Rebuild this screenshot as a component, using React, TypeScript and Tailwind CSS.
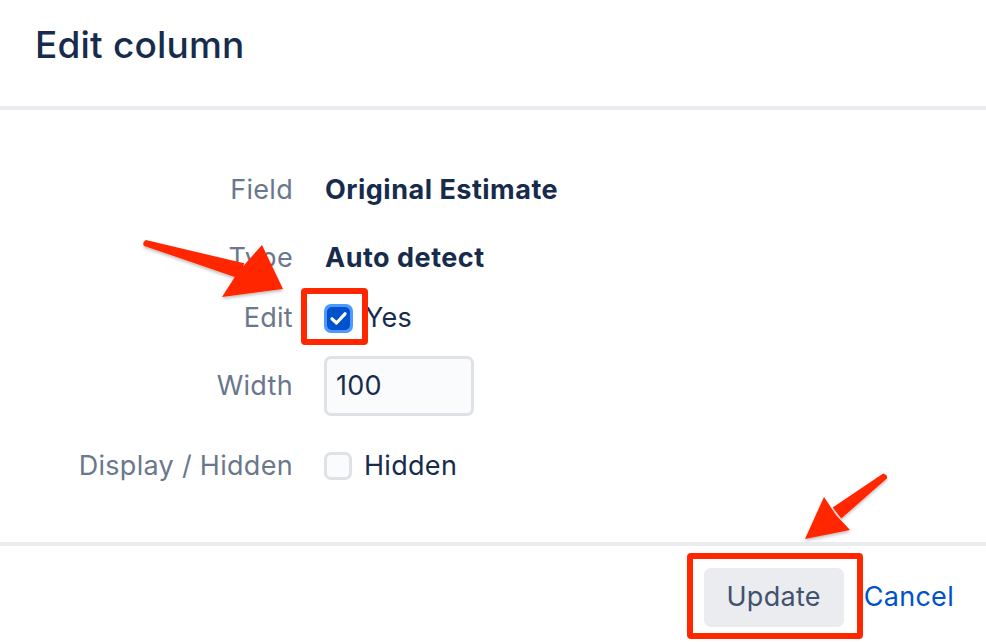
import React from "react";

function Checked() {
  return (
    <div className="w-[29px] h-[29px] rounded-[7px] bg-[#4c9aff] p-[3px] shrink-0">
      <div className="w-full h-full rounded-[5px] bg-[#0052cc] flex items-center justify-center">
        <svg width="23" height="23" viewBox="0 0 23 23">
          <path d="M5 11.8 L9.5 16 L18 6.8" fill="none" stroke="white" strokeWidth="3.2" strokeLinecap="round" strokeLinejoin="round" />
        </svg>
      </div>
    </div>
  );
}

function Unchecked() {
  return <div className="w-[28px] h-[28px] rounded-[7px] border-[3px] border-[#dfe1e6] bg-[#fafbfc] shrink-0" />;
}

export default function App() {
  return (
    <div className="relative w-[986px] h-[642px] bg-white overflow-hidden font-['Inter',sans-serif] text-[#172b4d]">
      {/* Header */}
      <div className="h-[106px] pl-[35px] pt-[26px]">
        <h1 className="text-[37px] leading-[38px] font-medium text-[#172b4d] tracking-[0.2px]">Edit column</h1>
      </div>
      <div className="h-[4px] bg-[#ebecf0]" />

      {/* Body */}
      <div className="h-[432px] pt-[50px] text-[27px] tracking-[0.3px]">
        <div className="flex items-center h-[60px]">
          <div className="w-[293px] text-right text-[#6b778c]">Field</div>
          <div className="ml-[32px] font-bold tracking-[0.5px]">Original Estimate</div>
        </div>
        <div className="flex items-center h-[60px] mt-[8px]">
          <div className="w-[293px] text-right text-[#6b778c]">Type</div>
          <div className="ml-[32px] font-bold tracking-[0.5px]">Auto detect</div>
        </div>
        <div className="flex items-center h-[60px]">
          <div className="w-[293px] text-right text-[#6b778c]">Edit</div>
          <div className="ml-[31px] flex items-center gap-[12px]">
            <Checked />
            <span>Yes</span>
          </div>
        </div>
        <div className="flex items-center h-[60px] mt-[8px]">
          <div className="w-[293px] text-right text-[#6b778c]">Width</div>
          <div className="ml-[31px] w-[150px] h-[60px] rounded-[7px] border-[3px] border-[#dfe1e6] bg-[#fafbfc] flex items-center pl-[9px]">
            100
          </div>
        </div>
        <div className="flex items-center h-[60px] mt-[20px]">
          <div className="w-[293px] text-right text-[#6b778c]">Display / Hidden</div>
          <div className="ml-[31px] flex items-center gap-[12px]">
            <Unchecked />
            <span>Hidden</span>
          </div>
        </div>
      </div>

      <div className="h-[4px] bg-[#ebecf0]" />

      {/* Footer */}
      <div className="h-[92px] flex items-center justify-end pr-[32px] pt-[11px] gap-[20px] text-[27px] tracking-[0.3px]">
        <button className="w-[140px] h-[59px] rounded-[7px] bg-[#ebecf0] text-[#42526e]">Update</button>
        <span className="text-[#0052cc]">Cancel</span>
      </div>

      {/* Annotations */}
      <div className="absolute left-[301px] top-[288px] w-[67px] h-[57px] border-[6px] border-[#ff2600] rounded-[4px]" />
      <div className="absolute left-[687px] top-[553px] w-[176px] h-[86px] border-[6px] border-[#ff2600] rounded-[4px]" />
      <svg className="absolute left-0 top-0 pointer-events-none" width="986" height="642" viewBox="0 0 986 642">
        <defs>
          <filter id="sh" x="-20%" y="-20%" width="140%" height="140%">
            <feDropShadow dx="0" dy="2" stdDeviation="1.5" floodColor="#000" floodOpacity="0.25" />
          </filter>
        </defs>
        <g fill="#ff2600" filter="url(#sh)">
          <path d="M145.8 240.1 L244.2 263.3 L239.8 278.7 L144.2 245.9 Q141.5 243 145.8 240.1 Z" />
          <path d="M262 245 L283 289 L222 297 L238 272 Z" />
          <path d="M886.8 478.4 L841.3 518.5 L832.7 507.5 L883.2 473.6 Q888 475 886.8 478.4 Z" />
          <path d="M824 497 L836 515 L850 530 L805 539 Z" />
        </g>
      </svg>
    </div>
  );
}
